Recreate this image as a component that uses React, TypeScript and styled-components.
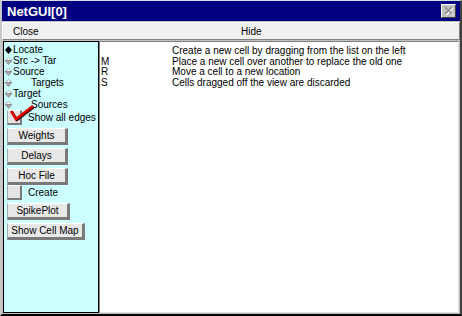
import React from 'react';
import styled, { createGlobalStyle } from 'styled-components';

const GlobalStyle = createGlobalStyle`
  html, body {
    margin: 0;
    padding: 0;
    background: #ffffff;
  }
  body {
    font-family: "Liberation Sans", Arial, sans-serif;
  }
`;

const tools = [
  { label: 'Locate', selected: true },
  { label: 'Src -> Tar' },
  { label: 'Source' },
  { label: 'Targets', indent: true },
  { label: 'Target' },
  { label: 'Sources', indent: true },
];

const help = [
  { key: '', text: 'Create a new cell by dragging from the list on the left' },
  { key: 'M', text: 'Place a new cell over another to replace the old one' },
  { key: 'R', text: 'Move a cell to a new location' },
  { key: 'S', text: 'Cells dragged off the view are discarded' },
];

const Diamond: React.FC<{ selected?: boolean }> = ({ selected }) => (
  <svg width='7' height='8' viewBox='0 0 7 8'>
    {selected ? (
      <polygon points='3.5,0 7,4 3.5,8 0,4' fill='#000' />
    ) : (
      <>
        <polygon points='0,3.5 3.5,0.5 7,3.5' fill='#ffffff' stroke='#9a9a9a' strokeWidth='0.8' />
        <polygon points='0,3.5 3.5,7.5 7,3.5' fill='#a8a8a8' stroke='#8a8a8a' strokeWidth='0.8' />
      </>
    )}
  </svg>
);

const App: React.FC = () => {
  return (
    <>
      <GlobalStyle />
      <Window>
        <TitleBar>
          NetGUI[0]
          <CloseBox>
            <svg width='10' height='10' viewBox='0 0 10 10'>
              <path d='M2 2 L9 9 M9 2 L2 9' stroke='#ffffff' strokeWidth='1.6' />
              <path d='M1 1 L8 8 M8 1 L1 8' stroke='#8c8c8c' strokeWidth='1.6' />
            </svg>
          </CloseBox>
        </TitleBar>
        <MenuBar>
          <MenuItem>Close</MenuItem>
          <MenuItem>Hide</MenuItem>
        </MenuBar>
        <Content>
          <ToolPanel>
            {tools.map((t) => (
              <RadioRow key={t.label}>
                <Diamond selected={t.selected} />
                <RadioLabel $indent={!!t.indent}>{t.label}</RadioLabel>
              </RadioRow>
            ))}
            <CheckRow>
              <CheckBox />
              <CheckLabel>Show all edges</CheckLabel>
              <CheckMark width='26' height='19' viewBox='0 0 26 19'>
                <polyline points='3,8 8,16 25,3' fill='none' stroke='#3a0000' strokeWidth='2.4' />
                <polyline points='2,7 7,15 24,2' fill='none' stroke='#e00000' strokeWidth='2.6' />
              </CheckMark>
            </CheckRow>
            <PanelButton $w={61}>Weights</PanelButton>
            <PanelButton $w={61}>Delays</PanelButton>
            <PanelButton $w={61}>Hoc File</PanelButton>
            <CheckRow>
              <CheckBox />
              <CheckLabel>Create</CheckLabel>
            </CheckRow>
            <PanelButton $w={63}>SpikePlot</PanelButton>
            <PanelButton $w={78}>Show Cell Map</PanelButton>
          </ToolPanel>
          <HelpView>
            {help.map((h) => (
              <HelpRow key={h.text}>
                <span>{h.key}</span>
                <span>{h.text}</span>
              </HelpRow>
            ))}
          </HelpView>
        </Content>
      </Window>
    </>
  );
};

export default App;

const Window = styled.div`
  width: 462px;
  height: 316px;
  box-sizing: border-box;
  background: #c0c0c0;
  border-style: solid;
  border-width: 1px 2px 2px 2px;
  border-color: #dcdcdc #404040 #000000 #c8c8c8;

  display: flex;
  flex-direction: column;
`;

const TitleBar = styled.div`
  height: 20px;
  flex-shrink: 0;
  background: #000080;
  color: #ffffff;
  font-size: 13px;
  font-weight: 700;
  padding: 0 4px 0 5px;

  display: flex;
  align-items: center;
  justify-content: space-between;
`;

const CloseBox = styled.div`
  width: 15px;
  height: 14px;
  box-sizing: border-box;
  background: #c0c0c0;
  border: 1px solid;
  border-color: #ffffff #404040 #404040 #ffffff;

  display: flex;
  align-items: center;
  justify-content: center;
`;

const MenuBar = styled.div`
  margin-top: 1px;
  height: 18px;
  flex-shrink: 0;
  box-sizing: border-box;
  background: #f0f0f0;
  border: 1px solid;
  border-color: #ffffff #808080 #808080 #ffffff;

  display: grid;
  grid-template-columns: 1fr 1fr;
  align-items: center;
`;

const MenuItem = styled.span`
  font-size: 10px;
  color: #000;
  padding-left: 10px;
`;

const Content = styled.div`
  flex: 1;
  min-height: 0;
  padding: 1px;
  display: flex;
`;

const ToolPanel = styled.div`
  width: 96px;
  flex-shrink: 0;
  box-sizing: border-box;
  background: #ccffff;
  border: 1px solid #000000;
  padding-top: 2px;

  display: flex;
  flex-direction: column;
  align-items: flex-start;
`;

const RadioRow = styled.div`
  height: 11px;
  padding-left: 1px;
  display: flex;
  align-items: center;
`;

const RadioLabel = styled.span<{ $indent: boolean }>`
  font-size: 10px;
  line-height: 11px;
  color: #000;
  padding-left: ${({ $indent }) => ($indent ? '19px' : '1px')};
`;

const CheckRow = styled.div`
  position: relative;
  height: 15px;
  padding-left: 3px;
  display: flex;
  align-items: center;
  gap: 6px;
`;

const CheckBox = styled.div`
  width: 15px;
  height: 15px;
  box-sizing: border-box;
  background: #e4e4e4;
  border-style: solid;
  border-width: 1px 2px 2px 1px;
  border-color: #ffffff #7a7a7a #7a7a7a #a8a8a8;
`;

const CheckLabel = styled.span`
  font-size: 10px;
  color: #000;
`;

const CheckMark = styled.svg`
  position: absolute;
  left: 5px;
  top: -6px;
`;

const PanelButton = styled.div<{ $w: number }>`
  width: ${({ $w }) => $w}px;
  height: 17px;
  margin: 3px 0 0 3px;
  box-sizing: border-box;
  background: #e8e8e8;
  border-style: solid;
  border-width: 1px 3px 3px 1px;
  border-color: #ffffff #7a7a7a #7a7a7a #a8a8a8;
  font-size: 10px;
  color: #000;

  display: flex;
  align-items: center;
  justify-content: center;
`;

const HelpView = styled.div`
  flex: 1;
  box-sizing: border-box;
  background: #ffffff;
  border: 1px solid;
  border-color: #808080 #dcdcdc #dcdcdc #808080;
  padding: 4px 0 0 1px;
`;

const HelpRow = styled.div`
  display: grid;
  grid-template-columns: 71px 1fr;
  font-size: 10px;
  line-height: 10.7px;
  color: #000;
  white-space: nowrap;
`;
